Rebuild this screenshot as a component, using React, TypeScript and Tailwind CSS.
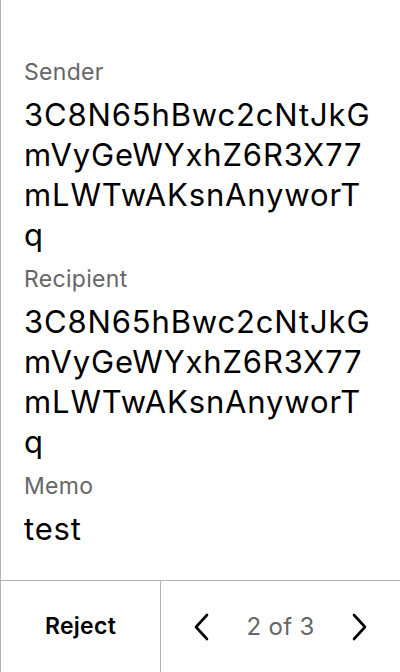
import React from "react";

const addrLines = ["3C8N65hBwc2cNtJkG", "mVyGeWYxhZ6R3X77", "mLWTwAKsnAnyworT", "q"];

function Field({ label, lines }: { label: string; lines: string[] }) {
  return (
    <div className="flex flex-col">
      <div className="text-[23px] leading-[28px] tracking-[0.3px] text-[#666666] mb-[9px]">{label}</div>
      <div className="text-[31px] leading-[40px] tracking-[0.85px] text-black mb-[10px] whitespace-nowrap">
        {lines.map((l, i) => (
          <div key={i}>{l}</div>
        ))}
      </div>
    </div>
  );
}

export default function App() {
  return (
    <div
      className="w-[400px] h-[672px] bg-white flex flex-col border-l border-[#b3b3b3] overflow-hidden"
      style={{ fontFamily: "Inter, 'Noto Sans', sans-serif" }}
    >
      <div className="flex-1 pt-[58px] pl-[23px] pr-[20px]">
        <Field label="Sender" lines={addrLines} />
        <Field label="Recipient" lines={addrLines} />
        <Field label="Memo" lines={["test"]} />
      </div>
      <div className="h-[92px] border-t border-[#b3b3b3] flex">
        <div className="w-[160px] border-r border-[#b3b3b3] flex items-center justify-center">
          <span className="text-[23px] tracking-[0.3px] font-semibold text-black">Reject</span>
        </div>
        <div className="flex-1 flex items-center justify-between px-[32px]">
          <svg width="16" height="28" viewBox="0 0 16 28" fill="none">
            <path d="M14 2 L3 14 L14 26" stroke="#000" strokeWidth="2.6" strokeLinecap="round" strokeLinejoin="round" />
          </svg>
          <span className="text-[24px] tracking-[0.3px] text-[#666666]">2 of 3</span>
          <svg width="16" height="28" viewBox="0 0 16 28" fill="none">
            <path d="M2 2 L13 14 L2 26" stroke="#000" strokeWidth="2.6" strokeLinecap="round" strokeLinejoin="round" />
          </svg>
        </div>
      </div>
    </div>
  );
}
